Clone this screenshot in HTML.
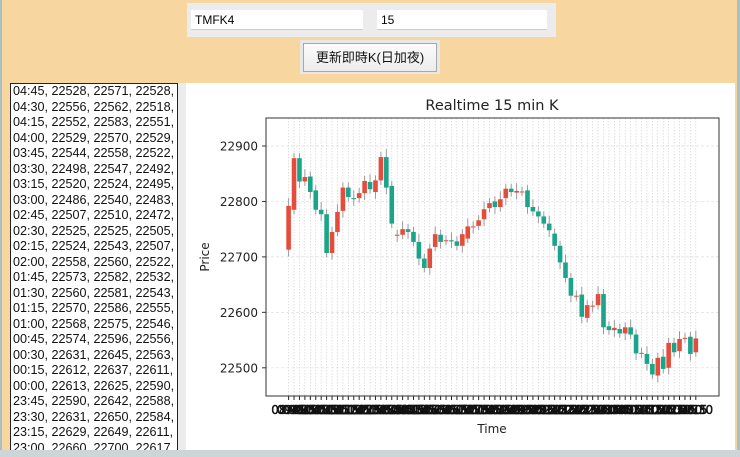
<!DOCTYPE html>
<html><head><meta charset="utf-8"><style>
html,body{margin:0;padding:0;width:740px;height:457px;overflow:hidden;background:#a9bfc6}
.win{position:absolute;left:2px;top:0;width:735px;height:451px;background:#f8d6a0}
.top{position:absolute;left:185px;top:3px;width:369px;height:34px;background:#ececec}
.in{position:absolute;top:7px;height:20px;background:#fff;border-bottom:1px solid #ccc;font:12px "Liberation Sans",sans-serif;line-height:20px;padding-left:4px;box-sizing:border-box}
.btn{position:absolute;left:298px;top:40px;width:140px;height:34px;background:#e8e8e8}
.btn div{position:absolute;left:3px;top:3px;width:132px;height:27px;border:1px solid #a8a8a8;background:linear-gradient(#fbfbfb,#ececec);font:13px "Liberation Sans","Noto Sans CJK TC",sans-serif;text-align:center;line-height:27px;color:#111}
.ta{position:absolute;left:8px;top:83px;width:168px;height:370px;background:#fff;border:1px solid #222;box-sizing:border-box;overflow:hidden;font:12.6px "Liberation Sans",sans-serif;line-height:15.5px;color:#111;padding:0 0 0 2px;white-space:pre}
.gap{position:absolute;left:176px;top:83px;width:8px;height:370px;background:#ececec}
.chart{position:absolute;left:186px;top:83px;width:549px;height:367px;background:#fff}
.bot{position:absolute;left:0;top:450px;width:740px;height:7px;background:#cdd5d8}
</style></head><body>
<div class="win">
<div class="top">
<div class="in" style="left:4px;width:172px">TMFK4</div>
<div class="in" style="left:190px;width:170px">15</div>
</div>
<div class="btn"><div>更新即時K(日加夜)</div></div>
<div class="ta">04:45, 22528, 22571, 22528, 2
04:30, 22556, 22562, 22518, 2
04:15, 22552, 22583, 22551, 2
04:00, 22529, 22570, 22529, 2
03:45, 22544, 22558, 22522, 2
03:30, 22498, 22547, 22492, 2
03:15, 22520, 22524, 22495, 2
03:00, 22486, 22540, 22483, 2
02:45, 22507, 22510, 22472, 2
02:30, 22525, 22525, 22505, 2
02:15, 22524, 22543, 22507, 2
02:00, 22558, 22560, 22522, 2
01:45, 22573, 22582, 22532, 2
01:30, 22560, 22581, 22543, 2
01:15, 22570, 22586, 22555, 2
01:00, 22568, 22575, 22546, 2
00:45, 22574, 22596, 22556, 2
00:30, 22631, 22645, 22563, 2
00:15, 22612, 22637, 22611, 2
00:00, 22613, 22625, 22590, 2
23:45, 22590, 22642, 22588, 2
23:30, 22631, 22650, 22584, 2
23:15, 22629, 22649, 22611, 2
23:00, 22660, 22700, 22617, 2</div>
<div class="gap"></div>
</div>
<div class="chart"></div>
<svg id="s" width="740" height="457" style="position:absolute;left:0;top:0" font-family="DejaVu Sans, sans-serif">
<text x="492" y="110" font-size="14.5" text-anchor="middle" fill="#222">Realtime 15 min K</text>
<text x="492" y="433" font-size="12" text-anchor="middle" fill="#222">Time</text>
<text transform="translate(209,257) rotate(-90)" font-size="12" text-anchor="middle" fill="#222">Price</text>
<g id="g"></g>
<rect x="266" y="118" width="453" height="278" fill="none" stroke="#333" stroke-width="1"/>
</svg>
<div class="bot"></div>
<script>
var d=[[22713,22792],[22785,22878],[22878,22836],[22836,22844],[22845,22817],[22820,22785],[22785,22777],[22777,22707],[22707,22745],[22745,22781],[22783,22825],[22825,22808],[22806,22804],[22806,22815],[22815,22837],[22835,22822],[22817,22838],[22838,22880],[22880,22825],[22828,22760],[22739,22740],[22740,22750],[22750,22745],[22745,22727],[22727,22697],[22697,22680],[22680,22715],[22718,22741],[22740,22727],[22729,22730],[22730,22728],[22728,22720],[22720,22741],[22733,22755],[22754,22755],[22756,22766],[22768,22786],[22788,22797],[22800,22790],[22790,22804],[22806,22823],[22823,22817],[22816,22819],[22818,22818],[22820,22790],[22790,22782],[22782,22773],[22773,22760],[22760,22748],[22742,22720],[22720,22690],[22690,22662],[22662,22630],[22629,22630],[22632,22592],[22590,22613],[22612,22612],[22613,22633],[22633,22573],[22575,22568],[22568,22572],[22570,22562],[22562,22573],[22573,22560],[22560,22526],[22526,22527],[22525,22507],[22507,22488],[22486,22518],[22520,22498],[22500,22545],[22545,22528],[22530,22552],[22553,22554],[22556,22525],[22528,22553]];
var h='',n=d.length,x0=288.6,dx=(695.8-288.6)/(n-1);
function Y(p){return 146+(22900-p)*0.5545;}
[22900,22800,22700,22600,22500].forEach(function(p){var y=Y(p);h+='<line x1="266" x2="719" y1="'+y+'" y2="'+y+'" stroke="#ddd" stroke-dasharray="3,2" stroke-width="0.7"/><line x1="262" x2="266" y1="'+y+'" y2="'+y+'" stroke="#333"/><text x="258" y="'+(y+4.5)+'" font-size="12" text-anchor="end" fill="#222">'+p+'</text>';});
var lab='';
for(var i=0;i<n;i++){var x=x0+i*dx,o=d[i][0],c=d[i][1];
h+='<line x1="'+x+'" x2="'+x+'" y1="118" y2="396" stroke="#ccc" stroke-dasharray="1.5,1.5" stroke-width="0.6"/>';
h+='<line x1="'+x+'" x2="'+x+'" y1="396" y2="400" stroke="#222" stroke-width="1"/>';
var hi=Math.max(o,c)+(i%3==0?14:9),lo=Math.min(o,c)-(i%2==0?12:8);
h+='<line x1="'+x+'" x2="'+x+'" y1="'+Y(hi)+'" y2="'+Y(lo)+'" stroke="#999" stroke-width="1"/>';
var col=c>=o?'#e64c3c':'#1aa58a',t=Y(Math.max(o,c)),b=Y(Math.min(o,c));
h+='<rect x="'+(x-2.3)+'" y="'+t+'" width="4.6" height="'+Math.max(1,b-t)+'" fill="'+col+'"/>';
var hh=(8+Math.floor((i*15+45)/60))%24,mm=(i*15+45)%60;
lab+='<text x="'+x+'" y="414" font-size="12" text-anchor="middle" fill="#111" stroke="#111" stroke-width="0.4">'+(hh<10?'0':'')+hh+':'+(mm<10?'0':'')+mm+'</text>';}
document.getElementById('g').innerHTML=h+lab;
</script>
</body></html>
